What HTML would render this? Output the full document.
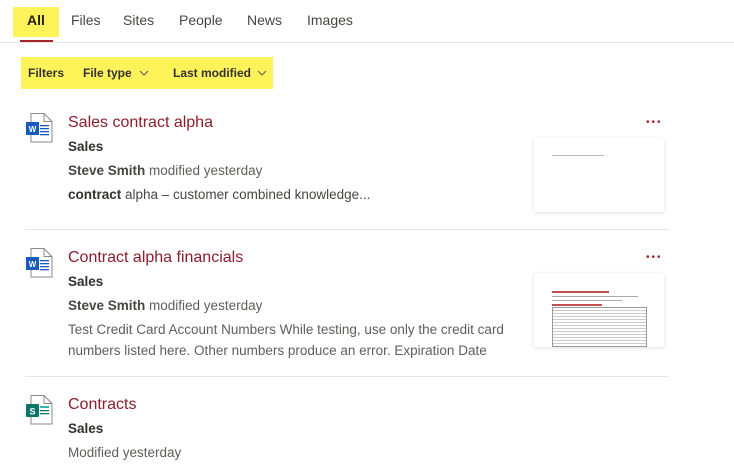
<!DOCTYPE html>
<html><head><meta charset="utf-8"><style>
*{margin:0;padding:0;box-sizing:border-box}
body{width:734px;height:471px;background:#fff;font-family:"Liberation Sans",sans-serif;position:relative;overflow:hidden;color:#323130}
.a{position:absolute;white-space:nowrap;line-height:1}
.tab{font-size:14px;color:#484644;top:13px}
.t{font-size:16px;color:#8a1e2b;left:68px}
.s{font-size:13.5px;color:#323130;font-weight:bold;left:68px}
.m{font-size:13.5px;color:#605e5c;left:68px}
.m b{color:#484644}
.f{font-size:12px;font-weight:bold;color:#323130;top:67px}
.hr{position:absolute;height:1px;background:#e5e5e5}
.thumb{position:absolute;left:534px;width:130px;height:74px;background:#fff;box-shadow:0 1px 4px rgba(0,0,0,.13);border-radius:2px}
.dots{position:absolute;left:646px;font-size:10px;color:#a4262c;letter-spacing:2px}
</style></head><body>
<div style="position:absolute;left:13px;top:7px;width:46px;height:30px;background:#fff35a"></div>
<div class="a tab" style="left:27px;color:#201f1e;font-weight:bold">All</div>
<div class="a tab" style="left:71px">Files</div>
<div class="a tab" style="left:123px">Sites</div>
<div class="a tab" style="left:179px">People</div>
<div class="a tab" style="left:247px">News</div>
<div class="a tab" style="left:307px">Images</div>
<div class="hr" style="left:0;top:42px;width:734px"></div>
<div style="position:absolute;left:20px;top:40px;width:33px;height:2px;background:#a4262c"></div>
<div style="position:absolute;left:21px;top:57px;width:252px;height:32px;background:#fff35a"></div>
<div class="a f" style="left:28px">Filters</div>
<div class="a f" style="left:83px">File type</div>
<div class="a f" style="left:173px">Last modified</div>
<svg style="position:absolute;left:139px;top:70px" width="10" height="6"><path d="M1 1l4 4 4-4" fill="none" stroke="#605e5c"/></svg>
<svg style="position:absolute;left:257px;top:70px" width="10" height="6"><path d="M1 1l4 4 4-4" fill="none" stroke="#605e5c"/></svg>

<!-- item 1 -->
<svg style="position:absolute;left:25px;top:113px" width="30" height="30" viewBox="0 0 30 30"><path d="M6 .5h13l8 8v20.5H6z" fill="#fff" stroke="#8a8886"/><path d="M19 .5v8h8" fill="none" stroke="#8a8886"/><rect x="15" y="12" width="9" height="1.3" fill="#185abd"/><rect x="15" y="15" width="9" height="1.3" fill="#185abd"/><rect x="15" y="18" width="9" height="1.3" fill="#185abd"/><rect x="15" y="21" width="9" height="1.3" fill="#185abd"/><rect x="1" y="9" width="13" height="13" fill="#185abd"/><text x="7.5" y="19" font-size="8" font-weight="bold" fill="#fff" text-anchor="middle" font-family="Liberation Sans">W</text></svg>
<div class="a t" style="top:115px">Sales contract alpha</div>
<div class="a s" style="top:140px">Sales</div>
<div class="a m" style="top:164px"><b>Steve Smith</b> modified yesterday</div>
<div class="a m" style="top:188px;color:#484644"><b style="color:#323130">contract</b> alpha – customer combined knowledge...</div>
<div class="dots a" style="top:118px">•••</div>
<div class="thumb" style="top:138px"><div style="position:absolute;left:18px;top:17px;width:52px;height:1px;background:#bbb"></div></div>
<div class="hr" style="left:25px;top:229px;width:643px"></div>

<!-- item 2 -->
<svg style="position:absolute;left:25px;top:248px" width="30" height="30" viewBox="0 0 30 30"><path d="M6 .5h13l8 8v20.5H6z" fill="#fff" stroke="#8a8886"/><path d="M19 .5v8h8" fill="none" stroke="#8a8886"/><rect x="15" y="12" width="9" height="1.3" fill="#185abd"/><rect x="15" y="15" width="9" height="1.3" fill="#185abd"/><rect x="15" y="18" width="9" height="1.3" fill="#185abd"/><rect x="15" y="21" width="9" height="1.3" fill="#185abd"/><rect x="1" y="9" width="13" height="13" fill="#185abd"/><text x="7.5" y="19" font-size="8" font-weight="bold" fill="#fff" text-anchor="middle" font-family="Liberation Sans">W</text></svg>
<div class="a t" style="top:250px">Contract alpha financials</div>
<div class="a s" style="top:275px">Sales</div>
<div class="a m" style="top:299px"><b>Steve Smith</b> modified yesterday</div>
<div class="a m" style="top:323px">Test Credit Card Account Numbers While testing, use only the credit card</div>
<div class="a m" style="top:344px">numbers listed here. Other numbers produce an error. Expiration Date</div>
<div class="dots a" style="top:253px">•••</div>
<div class="thumb" style="top:273px">
<div style="position:absolute;left:18px;top:18px;width:57px;height:2px;background:#c0504d"></div>
<div style="position:absolute;left:18px;top:23px;width:86px;height:1px;background:#aaa"></div>
<div style="position:absolute;left:18px;top:27px;width:70px;height:1px;background:#aaa"></div>
<div style="position:absolute;left:18px;top:31px;width:50px;height:2px;background:#c0504d"></div>
<div style="position:absolute;left:18px;top:34px;width:95px;height:40px;border:1px solid #999;background:repeating-linear-gradient(#fff 0 2px,#ccc 2px 3px)"></div>
</div>
<div class="hr" style="left:25px;top:376px;width:643px"></div>

<!-- item 3 -->
<svg style="position:absolute;left:25px;top:395px" width="30" height="30" viewBox="0 0 30 30"><path d="M6 .5h13l8 8v20.5H6z" fill="#fff" stroke="#8a8886"/><path d="M19 .5v8h8" fill="none" stroke="#8a8886"/><rect x="15" y="11" width="9" height="2" fill="#36b8b0"/><rect x="15" y="15" width="9" height="1.3" fill="#077568"/><rect x="15" y="18" width="9" height="1.3" fill="#077568"/><rect x="1" y="9" width="13" height="13" rx="1" fill="#077568"/><text x="7.5" y="19.5" font-size="9" font-weight="bold" fill="#fff" text-anchor="middle" font-family="Liberation Sans">S</text></svg>
<div class="a t" style="top:397px">Contracts</div>
<div class="a s" style="top:422px">Sales</div>
<div class="a m" style="top:446px">Modified yesterday</div>
</body></html>
